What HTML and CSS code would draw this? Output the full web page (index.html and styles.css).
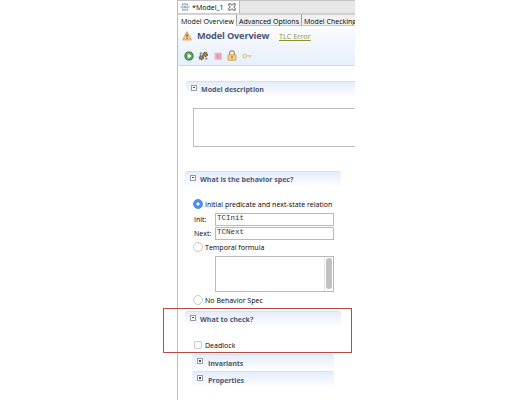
FILE: index.html
```html
<!DOCTYPE html>
<html lang="en">
<head>
<meta charset="utf-8">
<title>Model_1</title>
<link rel="stylesheet" href="styles.css">
</head>
<body>
<main class="editor">
  <div class="file-tabs">
    <div class="file-tab">
      <svg width="10" height="10" viewBox="0 0 10 10" fill="none" stroke="#7297b5"><path d="M.5 5h9M2.500 2h5M2.500 8h5M2.500 2v1.500M2.500 6.500V8M7.500 2v1.500M7.500 6.500V8M5 3.500v3"/></svg>
      <span class="file-name">*Model_1</span>
      <svg width="8" height="8" viewBox="0 0 8 8" fill="none" stroke="#444" stroke-width=".9"><path d="M.8.8h1.700L4 2.300 5.500.8h1.700v1.700L5.700 4l1.500 1.500v1.700H5.500L4 5.700 2.500 7.200H.8V5.500L2.300 4 .8 2.500z"/></svg>
    </div>
  </div>
  <nav class="page-tabs">
    <span class="page-tab active">Model Overview</span>
    <span class="page-tab second">Advanced Options</span>
    <span class="page-tab third">Model Checking</span>
  </nav>
  <header class="form-head">
    <div class="title-row">
      <svg width="10" height="10" viewBox="0 0 10 10"><path d="M5 .9 9.200 8.900H.8z" fill="#f9d28e" stroke="#e0ad67" stroke-width="1.200" stroke-linejoin="round"/><path d="M5 3.200v3M5 7v1.100" stroke="#69491f" stroke-width="1.100"/></svg>
      <h1>Model Overview</h1>
      <a class="error-link">TLC Error</a>
    </div>
    <div class="toolbar">
      <svg width="10" height="10" viewBox="0 0 10 10"><circle cx="5" cy="5" r="4.100" fill="#55a65a" stroke="#2f803d"/><path d="M3.700 2.300 7.700 5 3.700 7.700z" fill="#fff"/></svg>
      <svg width="11" height="10" viewBox="0 0 11 10" fill="none"><circle cx="7.200" cy="3.500" r="2" fill="#b08a58" stroke="#6b5134" stroke-width="1.500" stroke-dasharray="1.300 .5"/><circle cx="3.300" cy="6.600" r="1.900" fill="#b08a58" stroke="#655340" stroke-width="1.600" stroke-dasharray="1.200 .5"/><path d="M2 3.500 3.500 1.500M7.500 8.500 9.200 7" stroke="#5878a0" stroke-width="1.300"/></svg>
      <svg width="10" height="10" viewBox="0 0 10 10"><path d="M2 2h6.500v6.500H2z" fill="#e6a7b2" stroke="#eac1ca"/><path d="M3.500 4h3.500M3.500 6h3.500" stroke="#d999a5" stroke-width=".7"/></svg>
      <svg width="10" height="11" viewBox="0 0 10 11"><path d="M2.600 5V3.200a2.400 2.400 0 0 1 4.800 0V5" fill="none" stroke="#ae986d" stroke-width="1.300"/><rect x="1" y="4.700" width="8" height="5.600" rx=".8" fill="#f0cf7e" stroke="#c99b45" stroke-width=".8"/><path d="M5 6v2.500" stroke="#8a6a36"/></svg>
      <svg class="key" width="10" height="8" viewBox="0 0 10 8" fill="none" stroke="#dfcf98" stroke-width="1.500"><circle cx="2.700" cy="4" r="1.700" fill="#faf1cf"/><path d="M4.500 3.700H9.500M7.500 4v1.800"/></svg>
    </div>
  </header>

  <section class="description">
    <h2 class="bar open-ended"><i class="twisty"></i><span>Model description</span></h2>
    <div class="description-box"></div>
  </section>

  <section class="behavior">
    <h2 class="bar"><i class="twisty"></i><span>What is the behavior spec?</span></h2>
    <div class="choice first"><i class="radio checked"></i><span>Initial predicate and next-state relation</span></div>
    <div class="field"><span class="label">Init:</span><div class="input">TCInit</div></div>
    <div class="field"><span class="label">Next:</span><div class="input">TCNext</div></div>
    <div class="choice"><i class="radio"></i><span>Temporal formula</span></div>
    <div class="formula"><div class="track"><div class="thumb"></div></div></div>
    <div class="choice nospec"><i class="radio"></i><span>No Behavior Spec</span></div>
  </section>

  <section class="check">
    <h2 class="bar"><i class="twisty"></i><span>What to check?</span></h2>
    <div class="choice deadlock"><i class="checkbox"></i><span>Deadlock</span></div>
    <h3 class="bar sub"><i class="twisty plus"></i><span>Invariants</span></h3>
    <h3 class="bar sub"><i class="twisty plus"></i><span>Properties</span></h3>
  </section>
</main>
<div class="highlight"></div>
</body>
</html>
```
FILE: styles.css
```css
* { box-sizing: border-box; }
body {
  margin: 0;
  width: 532px;
  height: 400px;
  overflow: hidden;
  background: #fff;
  color: #000;
  font: 7.05px/10px "Open Sans", sans-serif;
  white-space: nowrap;
}
svg { display: block; flex: none; }
.editor {
  width: 178px;
  height: 400px;
  margin-left: 177px;
  border-left: 1px solid #bcbcbc;
  overflow: hidden;
}
.file-tabs {
  height: 14px;
  display: flex;
  background: #e7e7e7;
  border-top: 1px solid #c2c2c2;
  border-bottom: 1px solid #cdcdcd;
}
.file-tab {
  width: 62px;
  height: 12px;
  display: flex;
  align-items: center;
  padding-left: 2px;
  background: #fff;
  border-right: 1px solid #b9b9b9;
}
.file-name { width: 31px; margin: 0 5px 0 2px; line-height: 9px; }
.page-tabs { height: 12px; display: flex; background: #f1f1f1; }
.page-tab {
  height: 12px;
  line-height: 12px;
  padding-left: 3px;
  border-right: 1px solid #a2a2a2;
  border-bottom: 1px solid #c7c7c7;
  border-top: 1px solid #d4d4d4;
}
.page-tab.active { width: 59px; background: #fff; border-bottom-color: #fff; }
.page-tab.second { width: 65px; padding-left: 2px; }
.page-tab.third { width: 53px; padding-left: 2px; border-right: 0; overflow: hidden; }
.form-head {
  height: 40px;
  padding: 3px 0 0 4px;
  background: linear-gradient(#fbfdff, #e6effb);
  border-bottom: 1px solid #c9dcef;
}
.title-row { height: 14px; display: flex; align-items: center; }
h1 {
  width: 72px;
  margin: 0 10px 0 5px;
  color: #4c5675;
  font-size: 9.2px;
  letter-spacing: -.15px;
  line-height: 14px;
}
.error-link { color: #8f9028; font-size: 7.3px; text-decoration: underline; text-underline-offset: 1px; }
.toolbar { display: flex; align-items: center; gap: 4px; padding: 7px 0 0 2px; }
.key { margin-left: 1px; }
.bar {
  width: 156px;
  height: 16px;
  margin: 0 0 0 7px;
  padding-left: 5px;
  display: flex;
  align-items: center;
  border-top: 1px solid #d5e1f3;
  border-radius: 3px 3px 0 0;
  background: linear-gradient(#e4edfa, #fff);
  color: #50597a;
  font-size: 7.1px;
  font-weight: 700;
  letter-spacing: -.05px;
}
.bar span { line-height: 12px; padding-bottom: 2px; }
.twisty {
  position: relative;
  top: -2px;
  width: 6px;
  height: 6px;
  margin-right: 4px;
  flex: none;
  border: 1px solid #959ba6;
  background: linear-gradient(#454a55, #454a55) center / 2px 1px no-repeat, #fff;
}
.twisty.plus {
  margin-right: 5px;
  background: linear-gradient(#454a55, #454a55) center / 2px 2px no-repeat, #fff;
}
.description { height: 105px; padding-top: 15px; }
.bar.open-ended { width: auto; margin-left: 8px; border-top-right-radius: 0; }
.description-box {
  height: 39px;
  margin: 11px 0 0 15px;
  border: 1px solid #bcbcbc;
  border-right: 0;
}
.behavior { height: 140px; }
.choice { height: 12px; padding-left: 15px; display: flex; align-items: center; }
.choice.first { margin: 11px 0 1px; }
.radio {
  width: 10px;
  height: 10px;
  margin-right: 2px;
  flex: none;
  border: 1px solid #c7c7c7;
  border-radius: 50%;
}
.radio.checked {
  border-color: #4688e3;
  background: radial-gradient(circle, #fff 0 1.3px, #4c91ee 1.8px);
}
.field { display: flex; height: 15px; padding: 2px 0 0 16px; }
.field + .field { padding-top: 1px; }
.label { line-height: 12px; }
.field .input {
  width: 119px;
  height: 13px;
  margin-left: auto;
  margin-right: 21px;
  padding-left: 1px;
  border: 1px solid #b9b9b9;
  color: #333;
  font: 7.5px/8px "Liberation Mono", monospace;
}
.formula {
  width: 119px;
  height: 36px;
  margin: 3px 0 0 37px;
  display: flex;
  justify-content: flex-end;
  border: 1px solid #b9b9b9;
}
.track { width: 9px; padding: 1px; border-left: 1px solid #e6e6e6; }
.thumb { width: 6px; height: 31px; border-radius: 3px; background: #c1c1c1; }
.nospec { margin-top: 2px; }
.check { height: 89px; }
.checkbox {
  width: 8px;
  height: 8px;
  margin: 0 3px 0 1px;
  flex: none;
  border: 1px solid #c9c9c9;
  border-radius: 2px;
}
.deadlock { margin-top: 12px; }
.bar.sub { width: 142px; height: 17px; margin-left: 14px; letter-spacing: -.1px; }
.sub span { padding-bottom: 0; }
.deadlock + .sub { margin-top: 3px; }
.highlight {
  position: absolute;
  left: 163px;
  top: 308px;
  width: 189px;
  height: 45px;
  border: 1px solid #b74b41;
}
```
